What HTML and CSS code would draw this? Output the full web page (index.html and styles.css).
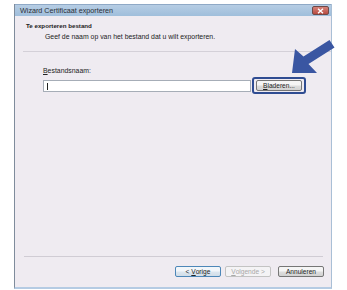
FILE: index.html
```html
<!DOCTYPE html>
<html lang="nl">
<head>
  <meta charset="utf-8" />
  <title>Wizard Certificaat exporteren</title>
  <link rel="stylesheet" href="styles.css">
</head>
<body>
  <div class="window">
    <!-- titelbalk -->
    <div class="titlebar">
      <span class="titlebar__text">Wizard Certificaat exporteren</span>
      <span class="titlebar__close">
        <svg width="9" height="6" viewBox="0 0 9 6"><path d="M2 0.8 L7 5.2 M7 0.8 L2 5.2" stroke="#fff" stroke-width="1.4"/></svg>
      </span>
    </div>

    <!-- kop -->
    <div class="header">
      <div class="header__title">Te exporteren bestand</div>
      <div class="header__sub">Geef de naam op van het bestand dat u wilt exporteren.</div>
    </div>

    <!-- inhoud -->
    <div class="content">
      <div class="field-label"><u>B</u>estandsnaam:</div>
      <div class="field-row">
        <div class="input"><span class="caret"></span></div>
        <div class="highlight">
          <span class="btn"><u>B</u>laderen...</span>
        </div>
      </div>
    </div>

    <!-- knoppen -->
    <div class="footer">
      <div class="footer__line"></div>
      <div class="buttons">
        <span class="btn btn--default">&lt;&nbsp;<u>V</u>orige</span>
        <span class="btn btn--disabled"><u>V</u>olgende&nbsp;&gt;</span>
        <span class="btn">Annuleren</span>
      </div>
    </div>
  </div>

  <!-- aanwijspijl -->
  <svg class="pointer" width="347" height="100" viewBox="0 0 347 100">
    <polygon points="292,73 295,49 303.5,56.5 329.5,40 334.5,47.5 308.5,64 317,73" fill="#3a56a2"/>
  </svg>
</body>
</html>
```

FILE: styles.css
```css
/* ===================== BASIS ===================== */
*, *::before, *::after {
  margin: 0;
  padding: 0;
  box-sizing: border-box;
}

body {
  background: #fff;
  font-family: "Liberation Sans", Arial, sans-serif;
  color: #222;
  width: 347px;
  height: 290px;
  position: relative;
  overflow: hidden;
}

/* ===================== VENSTER ===================== */
.window {
  width: 318px;
  height: 285px;
  margin: 4px 0 0 14px;
  background: #efebf1;
  border-left: 1px solid #7f8c9c;
  border-right: 1px solid #a9bfd6;
  border-bottom: 2px solid #b5cbe3;
  display: flex;
  flex-direction: column;
}

.titlebar {
  height: 12px;
  background: linear-gradient(to bottom, #b6cde4, #9fbedb);
  display: flex;
  align-items: center;
  justify-content: space-between;
  padding: 0 2px 0 5px;
  border-top: 1px solid #8fa9c6;
}
.titlebar__text {
  font-size: 7.2px;
  color: #2b2f36;
}
.titlebar__close {
  width: 17px;
  height: 9px;
  background: linear-gradient(to bottom, #d5837b, #b84a40);
  border: 1px solid #6d4a48;
  border-radius: 2px;
  display: flex;
  align-items: center;
  justify-content: center;
}

/* ===================== KOP ===================== */
.header {
  height: 36px;
  padding: 6px 0 0 3px;
  border-bottom: 1px solid #d4d0d8;
  margin-left: 8px;
}
.header__title {
  font-size: 6.2px;
  font-weight: bold;
  line-height: 8px;
}
.header__sub {
  font-size: 6.9px;
  line-height: 8px;
  padding: 3px 0 0 19px;
}

/* ===================== INHOUD ===================== */
.content {
  flex: 1;
  padding: 15px 0 0 28px;
}
.field-label {
  font-size: 6.9px;
  line-height: 8px;
}
.field-label u, .btn u {
  text-decoration-thickness: 0.5px;
  text-underline-offset: 1px;
}
.field-row {
  display: flex;
  align-items: center;
  margin-top: 2px;
}
.input {
  width: 208px;
  height: 12px;
  background: #fff;
  border: 1px solid #a6adb7;
  padding: 2px 0 0 3px;
}
.caret {
  display: block;
  width: 1px;
  height: 7px;
  background: #222;
}
.highlight {
  margin-left: 1px;
  width: 54px;
  height: 17px;
  border: 2px solid #2f4c92;
  border-radius: 3px;
  display: flex;
  align-items: center;
  justify-content: center;
}

/* ===================== KNOPPEN ===================== */
.btn {
  display: inline-flex;
  align-items: center;
  justify-content: center;
  width: 46px;
  height: 11px;
  font-size: 6.6px;
  color: #222;
  background: linear-gradient(to bottom, #f5f5f5 45%, #dddddd 55%, #d2d2d2);
  border: 1px solid #767676;
  border-radius: 2px;
}
.btn--default {
  border-color: #4d87b8;
  background: linear-gradient(to bottom, #f2f6fa 45%, #dce6ef 55%, #d1dde8);
}
.btn--disabled {
  color: #a8a8a8;
  border-color: #c3c3c3;
  background: #f4f3f5;
}

.footer {
  height: 31px;
}
.footer__line {
  height: 1px;
  margin: 0 8px 0 9px;
  background: #d0ccd4;
}
.buttons {
  display: flex;
  justify-content: flex-end;
  gap: 4px;
  padding: 9px 7px 0 0;
}
.buttons .btn:last-child {
  margin-left: 3px;
}

/* ===================== PIJL ===================== */
.pointer {
  position: absolute;
  left: 0;
  top: 0;
}
```
